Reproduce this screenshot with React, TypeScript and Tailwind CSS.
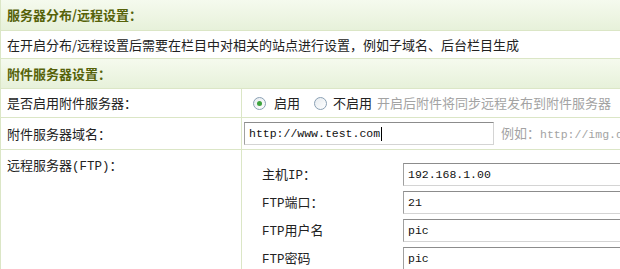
import React from "react";

const cjk = "font-['SimSun','Noto_Sans_CJK_SC',sans-serif]";
const mono = "font-['Liberation_Mono','Noto_Sans_CJK_SC',monospace]";

const Radio = ({ checked }: { checked?: boolean }) => (
  <span className="relative inline-flex h-[13px] w-[13px] items-center justify-center rounded-full border border-[#8aa0b4] bg-gradient-to-br from-[#e6ebef] to-white">
    {checked && <span className="h-[5px] w-[5px] rounded-full bg-[#3ea33e]" />}
  </span>
);

const Input = ({ value, className = "", caret }: { value: string; className?: string; caret?: boolean }) => (
  <div
    className={`flex h-[23px] items-center border border-t-[#8c8c8c] border-l-[#a0a0a0] border-b-[#d4d4d4] border-r-[#d4d4d4] bg-white pl-[4px] text-[11.5px] text-[#111] ${mono} ${className}`}
  >
    {value}
    {caret && <span className="ml-[1px] h-[14px] w-[1px] bg-black" />}
  </div>
);

const Header = ({ children }: { children: React.ReactNode }) => (
  <div className="flex h-full items-center border-b border-[#dbe6c6] bg-gradient-to-b from-[#f5faee] to-[#e7f1da] pl-[6px] text-[13px] font-bold text-[#56620a]">
    {children}
  </div>
);

// latin parts of labels in a narrower mono face, like the original SimSun
const Latin = ({ children }: { children: React.ReactNode }) => (
  <span className={`${mono} text-[12.5px]`}>{children}</span>
);

const ftpRows = [
  { label: "主机IP：", value: "192.168.1.00" },
  { label: "FTP端口：", value: "21" },
  { label: "FTP用户名", value: "pic" },
  { label: "FTP密码", value: "pic" },
];

export default function App() {
  return (
    <div className={`h-[269px] w-[620px] overflow-hidden bg-white ${cjk} text-[13px] text-[#222]`}>
      <div className="border-l border-[#dbe6c6]">
        <div className="h-[31px]">
          <Header>服务器分布/远程设置：</Header>
        </div>
        <div className="flex h-[28px] items-center border-b border-[#dbe6c6] pl-[6px]">
          在开启分布/远程设置后需要在栏目中对相关的站点进行设置，例如子域名、后台栏目生成
        </div>
        <div className="h-[30px]">
          <Header>附件服务器设置：</Header>
        </div>
        <div className="grid grid-cols-[241px_1fr]">
          <div className="flex h-[29px] items-center border-b border-r border-[#dbe6c6] pl-[6px]">是否启用附件服务器：</div>
          <div className="flex h-[29px] items-center overflow-hidden whitespace-nowrap border-b border-[#dbe6c6] pl-[11px]">
            <Radio checked />
            <span className="ml-[8px]">启用</span>
            <span className="ml-[14px] inline-flex">
              <Radio />
            </span>
            <span className="ml-[6px]">不启用</span>
            <span className="ml-[5px] text-[#a3a3a3]">开启后附件将同步远程发布到附件服务器</span>
          </div>

          <div className="flex h-[32px] items-center border-b border-r border-[#dbe6c6] pl-[6px]">附件服务器域名：</div>
          <div className="flex h-[32px] items-center overflow-hidden whitespace-nowrap border-b border-[#dbe6c6] pl-[2px]">
            <Input value="http://www.test.com" caret className="w-[250px] shrink-0" />
            <span className="ml-[7px] text-[#a3a3a3]">
              例如：<span className={`${mono} text-[11.5px]`}>http://img.d</span>
            </span>
          </div>

          <div className="h-[130px] border-r border-[#dbe6c6] pl-[6px] pt-[5px]">
            远程服务器<Latin>(FTP)</Latin>：
          </div>
          <div className="flex flex-col gap-[5px] pt-[13px]">
            {ftpRows.map((r) => (
              <div key={r.label} className="grid h-[23px] grid-cols-[161px_1fr] items-center">
                <span className="pl-[20px]">
                  {r.label.split(/(FTP|IP)/).map((p, i) =>
                    p === "FTP" || p === "IP" ? <Latin key={i}>{p}</Latin> : <span key={i}>{p}</span>
                  )}
                </span>
                <Input value={r.value} className="mr-[-20px]" />
              </div>
            ))}
          </div>
        </div>
      </div>
    </div>
  );
}
